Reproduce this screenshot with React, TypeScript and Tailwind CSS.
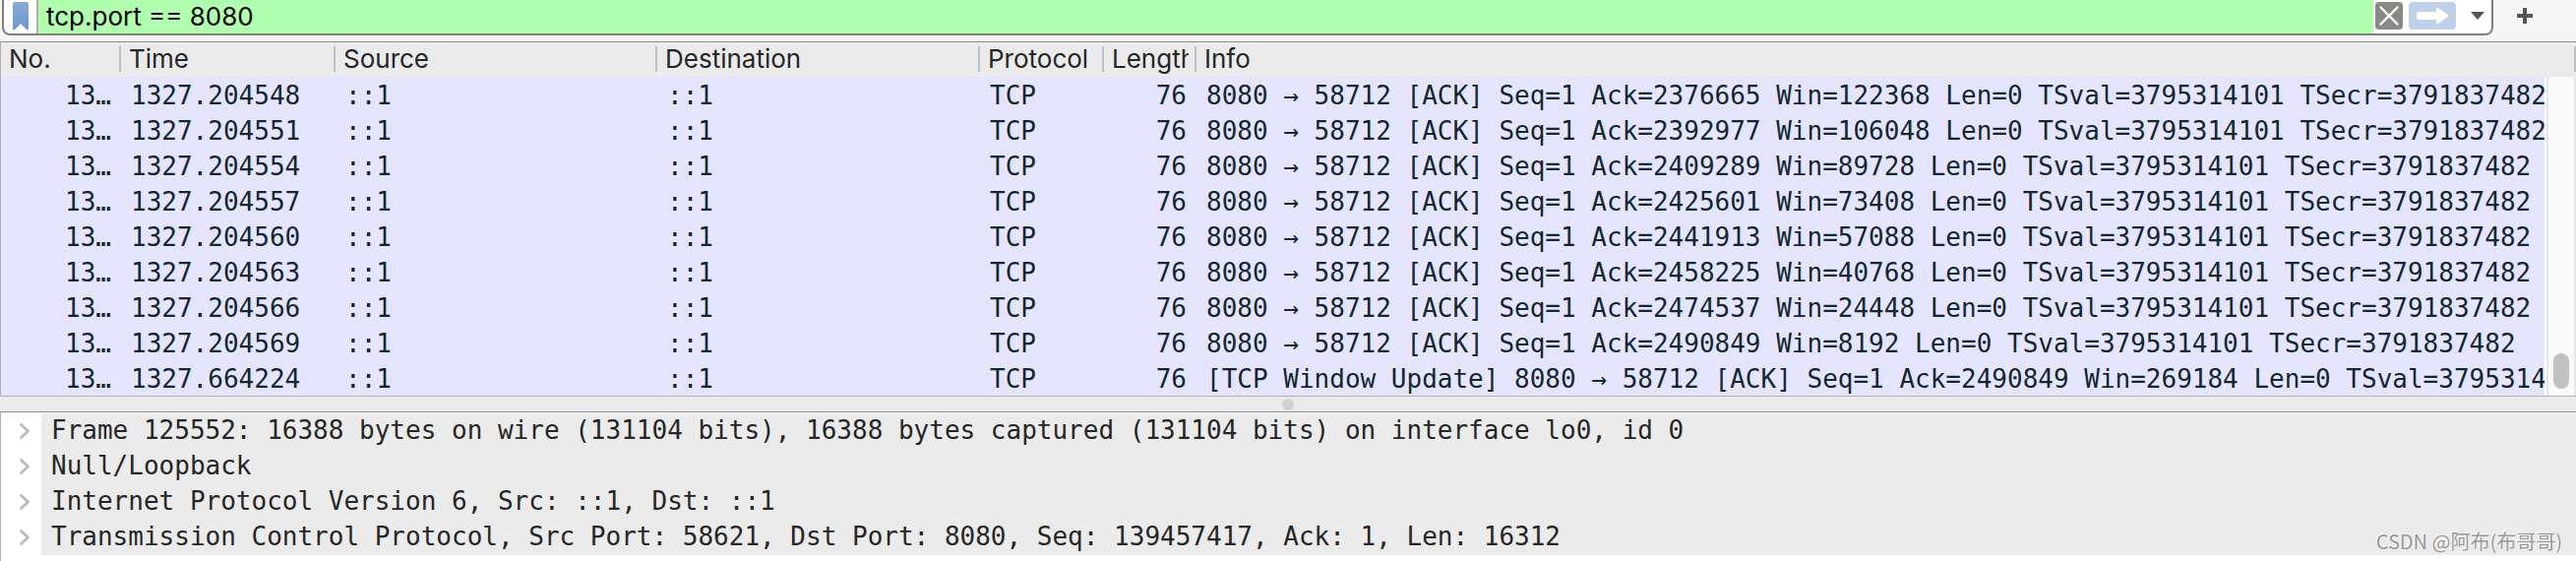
import React from 'react';

interface Packet {
  time: string;
  info: string;
}

const TAIL = 'Len=0 TSval=3795314101 TSecr=3791837482';

const packets: Packet[] = [
  { time: '1327.204548', info: `8080 → 58712 [ACK] Seq=1 Ack=2376665 Win=122368 ${TAIL}` },
  { time: '1327.204551', info: `8080 → 58712 [ACK] Seq=1 Ack=2392977 Win=106048 ${TAIL}` },
  { time: '1327.204554', info: `8080 → 58712 [ACK] Seq=1 Ack=2409289 Win=89728 ${TAIL}` },
  { time: '1327.204557', info: `8080 → 58712 [ACK] Seq=1 Ack=2425601 Win=73408 ${TAIL}` },
  { time: '1327.204560', info: `8080 → 58712 [ACK] Seq=1 Ack=2441913 Win=57088 ${TAIL}` },
  { time: '1327.204563', info: `8080 → 58712 [ACK] Seq=1 Ack=2458225 Win=40768 ${TAIL}` },
  { time: '1327.204566', info: `8080 → 58712 [ACK] Seq=1 Ack=2474537 Win=24448 ${TAIL}` },
  { time: '1327.204569', info: `8080 → 58712 [ACK] Seq=1 Ack=2490849 Win=8192 ${TAIL}` },
  { time: '1327.664224', info: `[TCP Window Update] 8080 → 58712 [ACK] Seq=1 Ack=2490849 Win=269184 ${TAIL}` },
];

const details = [
  'Frame 125552: 16388 bytes on wire (131104 bits), 16388 bytes captured (131104 bits) on interface lo0, id 0',
  'Null/Loopback',
  'Internet Protocol Version 6, Src: ::1, Dst: ::1',
  'Transmission Control Protocol, Src Port: 58621, Dst Port: 8080, Seq: 139457417, Ack: 1, Len: 16312',
];

const columns = [
  { name: 'No.', width: 'w-[122px]', clip: '' },
  { name: 'Time', width: 'w-[218px]', clip: '' },
  { name: 'Source', width: 'w-[327px]', clip: '' },
  { name: 'Destination', width: 'w-[328px]', clip: '' },
  { name: 'Protocol', width: 'w-[126px]', clip: '' },
  { name: 'Length', width: 'w-[94px]', clip: 'overflow-x-clip' },
  { name: 'Info', width: '', clip: '' },
];

const FilterBar = () => (
  <header className="flex h-[42px] w-full items-start bg-[#f5f5f5] pl-[2px]">
    <div className="flex h-9 min-w-0 flex-1 overflow-hidden rounded-b-lg border-2 border-t-0 border-[#808080] bg-white">
      <button aria-label="Bookmarks" className="flex w-[35px] shrink-0 justify-center border-r-2 border-[#b0b0b0] pt-[2px]">
        <svg width="16" height="28" viewBox="0 0 16 28">
          <defs>
            <linearGradient id="ribbon" x1="0" y1="0" x2="0" y2="1">
              <stop offset="0" stopColor="#84aad9" />
              <stop offset="1" stopColor="#6d98cd" />
            </linearGradient>
          </defs>
          <path d="M2 0h12a2 2 0 0 1 2 2v26h-2l-6-6-6 6H0V2a2 2 0 0 1 2-2z" fill="url(#ribbon)" />
        </svg>
      </button>
      <input
        aria-label="Display filter"
        defaultValue="tcp.port == 8080"
        className="h-8 min-w-0 flex-1 bg-[#afffaf] px-2 font-[Inter,sans-serif] text-[26px] text-black outline-none box-content pb-[2px]"
      />
      <div className="flex shrink-0 items-start gap-[6px] pt-[2px] pl-[2px]">
        <button aria-label="Clear" className="h-7 w-7 rounded bg-[#888a85]">
          <svg width="28" height="28" viewBox="0 0 28 28" stroke="#fff" strokeWidth="2.4" strokeLinecap="round">
            <path d="M5.500 5.500l17 17M22.500 5.500l-17 17" />
          </svg>
        </button>
        <button aria-label="Apply" className="h-7 w-12 rounded bg-[#bdd1ea]">
          <svg width="48" height="28" viewBox="0 0 48 28" fill="#fff">
            <path d="M10 10h18V7q0-2 2-1l10 7q1 1 0 2l-10 7q-2 1-2-1v-3H10q-2 0-2-2v-4q0-2 2-2z" />
          </svg>
        </button>
        <button aria-label="Recent filters" className="flex h-7 w-[30px] items-center justify-center pl-[2px]">
          <svg width="14" height="8" viewBox="0 0 14 8">
            <path d="M0 0h14L7 8z" fill="#555" />
          </svg>
        </button>
      </div>
    </div>
    <button aria-label="Add filter button" className="flex h-8 w-[84px] shrink-0 items-center pl-6">
      <svg width="16" height="16" viewBox="0 0 16 16" fill="#555">
        <path d="M6 0h4v6h6v4h-6v6H6v-6H0V6h6z" />
      </svg>
    </button>
  </header>
);

const PacketList = () => (
  <section className="flex border-y border-l border-t-[#8a8a8a] border-b-[#b0b0b0] border-l-[#b0b0b0] bg-white">
    <div className="min-w-0 flex-1">
      <table className="w-full table-fixed border-collapse whitespace-pre text-left">
        <thead className="bg-[#ebebeb] font-[Inter,sans-serif] text-[26px] text-[#262626]">
          <tr>
            {columns.map((col, i) => (
              <th key={col.name} className={`p-0 pt-1 pb-[5px] font-normal ${col.width}`}>
                <div className={`flex h-[26px] items-center pr-[6px] pl-2 ${i < 6 ? 'border-r-2 border-[#c0c0c0]' : ''}`}>
                  <span className={`min-w-0 flex-1 leading-8 ${col.clip}`}>{col.name}</span>
                </div>
              </th>
            ))}
          </tr>
        </thead>
        <tbody className="bg-[#e6e5ff] font-['DejaVu_Sans_Mono',monospace] text-[26px] leading-[34px] text-[#12272e]">
          {packets.map((p) => (
            <tr key={p.time} className="h-9">
              <td className="p-0 pt-[2px] pr-[10px] text-right">13…</td>
              <td className="p-0 pt-[2px] pl-[10px]">{p.time}</td>
              <td className="p-0 pt-[2px] pl-[10px]">::1</td>
              <td className="p-0 pt-[2px] pl-[10px]">::1</td>
              <td className="p-0 pt-[2px] pl-[10px]">TCP</td>
              <td className="p-0 pt-[2px] pr-[10px] text-right">76</td>
              <td className="overflow-x-clip p-0 pt-[2px] pl-[10px]">{p.info}</td>
            </tr>
          ))}
        </tbody>
      </table>
    </div>
    <div className="flex w-8 flex-col">
      <div className="flex h-[35px] justify-end bg-[#ebebeb] pt-1 pb-[5px]">
        <div className="w-[2px] bg-[#c0c0c0]" />
      </div>
      <div className="ml-[2px] flex flex-1 items-end justify-center border-x-2 border-[#e6e6e6] bg-[#fafafa] pb-[7px]">
        <div className="h-9 w-4 rounded-full bg-[#c1c1c1]" />
      </div>
    </div>
  </section>
);

const PacketDetails = () => (
  <section className="border-l border-t border-l-[#b0b0b0] border-t-[#8a8a8a] bg-white pt-px pb-[6px]">
    <ul className="font-['DejaVu_Sans_Mono',monospace] text-[26px] leading-[34px] text-[#262626]">
      {details.map((line) => (
        <li key={line} className="flex h-9 whitespace-pre">
          <button aria-label="Expand" className="flex w-[41px] items-center pl-[19px]">
            <svg width="10" height="16" viewBox="0 0 10 16" fill="none" stroke="#b9b9b9" strokeWidth="2.6" strokeLinecap="round" strokeLinejoin="round">
              <path d="M1.500 1.500L8.500 8l-7 6.500" />
            </svg>
          </button>
          <span className="flex-1 bg-[#ebebeb] pl-[10px]">{line}</span>
        </li>
      ))}
    </ul>
  </section>
);

export default function App() {
  return (
    <main className="relative bg-[#ebebeb]">
      <FilterBar />
      <PacketList />
      <div className="flex h-[15px] items-center justify-center">
        <div className="h-3 w-3 rounded-full bg-[#d2d2d2]" />
      </div>
      <PacketDetails />
      <div className="absolute right-[14px] bottom-2 font-['Noto_Sans_CJK_SC',sans-serif] text-[20px] leading-6 text-[#999999] [text-shadow:-1px_-1px_0_#ffffff]">
        CSDN @阿布(布哥哥)
      </div>
    </main>
  );
}
